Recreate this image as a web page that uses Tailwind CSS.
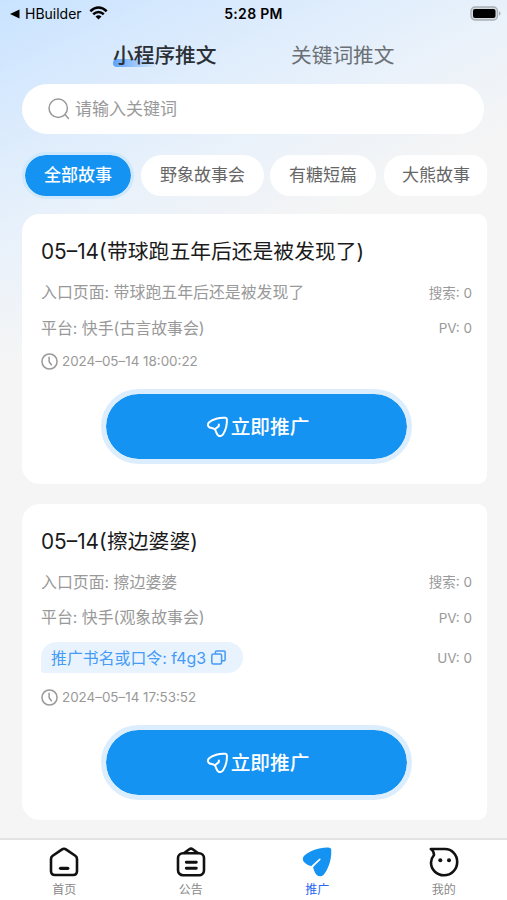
<!DOCTYPE html>
<html lang="zh-CN">
<head>
<meta charset="utf-8">
<title>推广</title>
<script src="https://cdn.jsdelivr.net/npm/@tailwindcss/browser@4"></script>
</head>
<body class="w-[507px] h-[900px] overflow-hidden bg-[#f5f5f5] font-['Inter','Noto_Sans_CJK_SC',sans-serif] whitespace-nowrap">
<svg class="hidden">
  <symbol id="plane" viewBox="0 0 24 24"><path d="M20.2 2.9 C14 2.4 6.6 4.4 3 7.8 C1.4 9.6 1.8 11.8 3.6 12.8 C5.4 13.8 7.8 13.6 9.2 15 C10.6 16.6 10.6 19.4 12.6 21.2 C14.6 22.6 16.8 21.8 18 19.8 C21 15.2 22 9.4 21.8 4.6 C21.7 3.4 21.2 3 20.2 2.9 Z M9.3 14.8 L13.4 11.6 V9.8" fill="none" stroke="currentColor" stroke-width="2.1" stroke-linecap="round" stroke-linejoin="round"/></symbol>
  <symbol id="clock" viewBox="0 0 18 18"><circle cx="9" cy="9" r="8" fill="none" stroke="currentColor" stroke-width="1.6"/><path d="M8.6 4.6V9.2L11 12.5" fill="none" stroke="currentColor" stroke-width="1.6" stroke-linecap="round"/></symbol>
</svg>
<div class="flex flex-col h-full bg-[linear-gradient(155deg,#c9e3ff_0px,#d9eafd_105px,#e8f1fb_215px,#f5f5f5_335px)]">

  <!-- Status bar -->
  <header class="h-7 shrink-0 grid grid-cols-3 items-center text-black">
    <div class="flex items-center pl-[10px] pb-px">
      <svg class="w-[10px] h-[10px]" viewBox="0 0 10 10"><path d="M0 5 9.5 .5v9z"/></svg>
      <span class="ml-[5px] text-[14px] w-[60px]">HBuilder</span>
      <svg class="ml-[4px] mb-px w-[19px] h-[14px]" viewBox="0 0 19 14"><g fill="none" stroke="#000" stroke-width="2.5"><path d="M1.3 5.2Q9.5-2.2 17.7 5.2"/><path d="M4.2 8.3Q9.5 3.6 14.8 8.3"/></g><path d="M6.5 10.5Q9.5 8 12.5 10.5L9.5 13.6Z"/></svg>
    </div>
    <div class="pb-px text-center text-[14px] font-semibold tracking-[.3px]">5:28 PM</div>
    <div class="flex justify-end pr-[6px] pb-[2px]">
      <svg class="w-[31px] h-[15px]" viewBox="0 0 31 15"><rect x="1" y="1" width="26.5" height="13" rx="4" fill="#d5dade" stroke="#a9afb5" stroke-width="1.3"/><rect x="3" y="3" width="22.5" height="9" rx="2" fill="#000"/><path d="M29 5v5q3-2.5 0-5z" fill="#a9afb5"/></svg>
    </div>
  </header>

  <!-- Top tabs -->
  <nav class="h-[56px] shrink-0 flex pl-[113px] gap-[74px] text-[20.7px] leading-[56px]">
    <div class="relative w-[104px] text-[#2b3036] font-medium">
      <i class="absolute left-0 top-[31px] w-[44px] h-[8px] rounded-full bg-linear-to-r from-[#5ea2fa] to-[#5ea2fa00]"></i>
      <span class="relative">小程序推文</span>
    </div>
    <div class="text-[#6b7075]">关键词推文</div>
  </nav>

  <!-- Search -->
  <div class="h-[50px] shrink-0 ml-[22px] mr-[23px] rounded-full bg-white flex items-center pl-[26px] text-[#999]">
    <svg class="w-[22px] h-[22px]" viewBox="0 0 22 22" fill="none" stroke="currentColor" stroke-width="1.5" stroke-linecap="round"><circle cx="10.2" cy="10.2" r="9.2"/><path d="M17.2 16.8 20.5 20.5"/></svg>
    <span class="ml-[5px] pt-[2px] text-[17px]">请输入关键词</span>
  </div>

  <!-- Categories -->
  <div class="mt-[15px] h-[52px] shrink-0 ml-[22px] w-[465px] overflow-hidden flex items-center text-[17px] text-[#666]">
    <div class="shrink-0 w-[112px] h-[47px] pt-[2px] rounded-full border-3 border-[#cfe8fd] bg-[#1593f2] bg-clip-padding text-white font-medium flex items-center justify-center">全部故事</div>
    <div class="shrink-0 ml-[7px] w-[123px] h-[41px] pt-[2px] rounded-full bg-white flex items-center justify-center">野象故事会</div>
    <div class="shrink-0 ml-[6px] w-[106px] h-[41px] pt-[2px] rounded-full bg-white flex items-center justify-center">有糖短篇</div>
    <div class="shrink-0 ml-[8px] w-[103px] h-[41px] pt-[2px] pl-[18px] rounded-l-[20px] rounded-r-[15px] bg-white flex items-center">大熊故事</div>
  </div>

  <!-- Stories -->
  <main class="mt-[13px] ml-[22px] w-[465px] h-[624px] shrink-0 flex flex-col gap-5 text-[#999]">
    <article class="h-[270px] shrink-0 bg-white rounded-l-[18px] rounded-r-[9px] pt-[22px] pl-[19px] pr-[15px]">
      <h2 class="h-[30px] mb-2 pt-[2px] flex items-center text-[20.8px] text-[#1a1a1a]"><span class="w-[66px]">05–14(</span>带球跑五年后还是被发现了)</h2>
      <div class="h-9 pt-[2px] flex items-center justify-between text-[15.9px]"><span>入口页面: 带球跑五年后还是被发现了</span><span class="text-[13.5px]">搜索: 0</span></div>
      <div class="h-9 pt-px flex items-center justify-between text-[15.9px]"><span>平台: 快手(古言故事会)</span><span class="text-[13.5px]">PV: 0</span></div>
      <div class="h-[30px] flex items-center gap-[4px] text-[13.4px]"><svg class="w-[17px] h-[17px]"><use href="#clock"/></svg><span>2024–05–14 18:00:22</span></div>
      <button class="mt-[13px] ml-[60px] w-[311px] h-[75px] pl-[2px] rounded-full border-5 border-[#dceefd] bg-[#1593f2] bg-clip-padding text-white text-[19.7px] flex items-center justify-center gap-[2px]"><svg class="w-[23px] h-[23px]"><use href="#plane"/></svg><span class="pt-[2px] font-medium">立即推广</span></button>
    </article>
    <article class="h-[316px] shrink-0 bg-white rounded-l-[18px] rounded-r-[9px] pt-[22px] pl-[19px] pr-[15px]">
      <h2 class="h-[30px] mb-2 pt-[2px] flex items-center text-[20.8px] text-[#1a1a1a]"><span class="w-[66px]">05–14(</span>擦边婆婆)</h2>
      <div class="h-9 pt-px flex items-center justify-between text-[15.9px]"><span>入口页面: 擦边婆婆</span><span class="text-[13.5px]">搜索: 0</span></div>
      <div class="h-9 flex items-center justify-between text-[15.9px]"><span>平台: 快手(观象故事会)</span><span class="text-[13.5px]">PV: 0</span></div>
      <div class="mt-[6px] mb-[9px] h-[31px] flex items-center justify-between">
        <div class="w-[202px] h-full rounded-t-[16px] rounded-br-[16px] rounded-bl-[3px] bg-[#e8f3fe] pl-[10px] flex items-center text-[15.9px] text-[#459bf5]"><span class="pt-[2px]">推广书名或口令: f4g3</span>
          <svg class="ml-[5px] w-[15px] h-[15px]" viewBox="0 0 15 15" fill="none" stroke="currentColor" stroke-width="1.5" stroke-linejoin="round"><rect x=".8" y="4" width="9.8" height="10" rx="1.5"/><path d="M4.5 3.8V1.8Q4.5.9 5.4.9H13.2Q14.1.9 14.1 1.8V9.8Q14.1 10.8 13.2 10.8H11"/></svg>
        </div>
        <span class="pt-[2px] text-[13.5px]">UV: 0</span>
      </div>
      <div class="h-[30px] flex items-center gap-[4px] text-[13.4px]"><svg class="w-[17px] h-[17px]"><use href="#clock"/></svg><span>2024–05–14 17:53:52</span></div>
      <button class="mt-[13px] ml-[60px] w-[311px] h-[75px] pl-[2px] rounded-full border-5 border-[#dceefd] bg-[#1593f2] bg-clip-padding text-white text-[19.7px] flex items-center justify-center gap-[2px]"><svg class="w-[23px] h-[23px]"><use href="#plane"/></svg><span class="pt-[2px] font-medium">立即推广</span></button>
    </article>
  </main>

  <!-- Tab bar -->
  <footer class="h-[62px] shrink-0 bg-white border-t-2 border-[#e2e2e2] grid grid-cols-4 pl-px text-[12px] leading-[18px] text-[#888]">
    <div class="flex flex-col items-center pt-[7px]">
      <svg class="w-[30px] h-[30px] mb-[4px]" viewBox="0 0 30 30" fill="none" stroke="#111" stroke-width="2.6" stroke-linecap="round" stroke-linejoin="round"><path d="M12.7 2.6Q15 .9 17.3 2.6L26.3 8.8Q28 10 28 12V24Q28 28 24 28H6Q2 28 2 24V12Q2 10 3.7 8.8Z"/><path d="M11.5 21.3H18.8" stroke-width="3.2"/></svg>首页</div>
    <div class="flex flex-col items-center pt-[7px]">
      <svg class="w-[30px] h-[30px] mb-[4px]" viewBox="0 0 30 30" fill="none" stroke="#111" stroke-width="2.6" stroke-linecap="round" stroke-linejoin="round"><rect x="2" y="6.2" width="26" height="22" rx="5"/><path d="M8.5 5.8 13.3 2.2Q15 1 16.7 2.2L21.5 5.8"/><path d="M10.3 15.3H20.3M10.3 21.3H20.3" stroke-width="2.9"/></svg>公告</div>
    <div class="flex flex-col items-center pt-[7px] text-[#2867f0]">
      <svg class="w-[30px] h-[30px] mb-[4px]" viewBox="0 0 30 30"><path d="M29.2 2.6C29.1 1.4 28.4.8 27.2.7 18 0 7 4 2 9 .3 10.9.5 13.3 2 15 4.5 18 7.5 18.7 10 19.4L17.8 12.4 11 20.3C12 23 12.7 26.5 15 28.3 17.5 30.2 20.5 29.3 22.3 27 27 20.5 29.8 11 29.2 2.6Z" fill="#1593f2"/><path d="M17.8 12.4 8.5 20.8" stroke="#fff" stroke-width="1.6" stroke-linecap="round"/></svg>推广</div>
    <div class="flex flex-col items-center pt-[7px]">
      <svg class="w-[30px] h-[30px] mb-[4px]" viewBox="0 0 30 30" fill="none" stroke="#111" stroke-width="2.6" stroke-linejoin="round"><path d="M1.8 2H16C23 2 28.2 7.8 28.2 15S22.5 28.3 15 28.3 2 22.5 2 15.5C2 12.5 3.2 10.2 5 8Q5 4 1.8 2Z"/><circle cx="11.3" cy="13.2" r="2" fill="#111" stroke="none"/><circle cx="20" cy="13.2" r="2" fill="#111" stroke="none"/></svg>我的</div>
  </footer>
</div>
</body>
</html>
